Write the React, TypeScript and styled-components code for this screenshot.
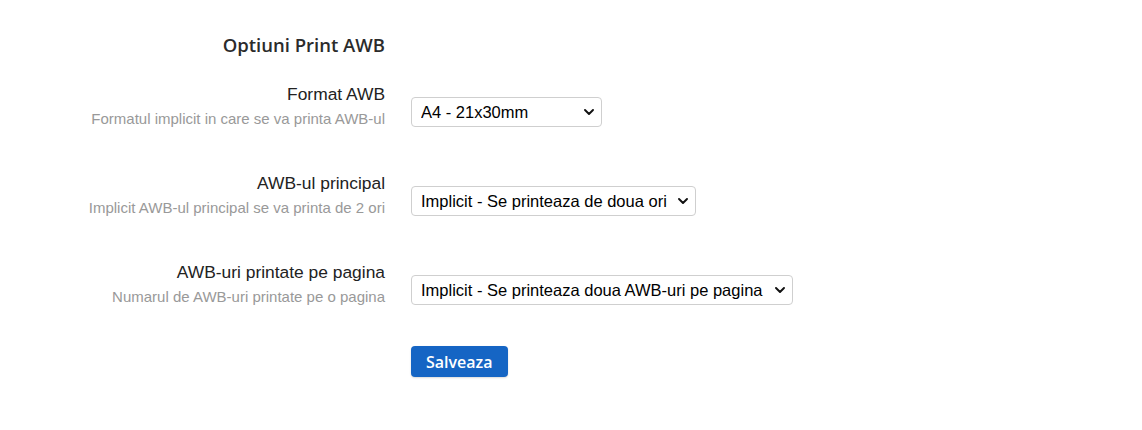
import React from "react";
import styled, { createGlobalStyle } from "styled-components";

const Global = createGlobalStyle`
  html, body { margin: 0; padding: 0; background: #fff; }
  body { font-family: "Liberation Sans", Arial, sans-serif; color: #222; }
`;

const Page = styled.div`
  padding-top: 33px;
  width: 1142px;
  height: 430px;
  box-sizing: border-box;
`;

const Grid = styled.div`
  display: grid;
  grid-template-columns: 385px 1fr;
  column-gap: 26px;
`;

const Title = styled.h2`
  margin: 0 0 27px 0;
  text-align: right;
  font-family: "Open Sans", sans-serif;
  font-weight: 600;
  font-size: 18.5px;
  line-height: 24px;
  color: #2b2b2b;
`;

const Rows = styled.div`
  display: flex;
  flex-direction: column;
  gap: 44px;
`;

const LabelBlock = styled.div`
  text-align: right;
`;

const Label = styled.div`
  font-size: 17.4px;
  line-height: 20px;
  color: #222;
`;

const Hint = styled.div`
  margin-top: 5px;
  font-size: 15px;
  line-height: 20px;
  color: #999;
`;

const Control = styled.div`
  padding-top: 13px;
`;

const SelectWrap = styled.span`
  position: relative;
  display: inline-block;
`;

const Select = styled.select<{ $minWidth?: number }>`
  appearance: none;
  -webkit-appearance: none;
  box-sizing: border-box;
  height: 30px;
  min-width: ${(p) => (p.$minWidth ? `${p.$minWidth}px` : "0")};
  padding: 0 28px 0 9px;
  border: 1px solid #cfcfcf;
  border-radius: 4px;
  background: #fff;
  color: #000;
  font-family: "Liberation Sans", Arial, sans-serif;
  font-size: 16.5px;
  outline: none;
`;

const Chevron = styled.svg`
  position: absolute;
  right: 8px;
  top: 50%;
  margin-top: -3px;
  width: 10px;
  height: 6px;
  pointer-events: none;
`;

const Actions = styled.div`
  margin-top: 39px;
`;

const Button = styled.button`
  box-sizing: border-box;
  height: 31px;
  padding: 0 15px;
  border: none;
  border-radius: 4px;
  background: #1565c4;
  color: #fff;
  font-family: "Open Sans", sans-serif;
  font-weight: 600;
  font-size: 16px;
  box-shadow: 0 1px 2px rgba(0, 0, 0, 0.15);
  cursor: pointer;
`;

type FieldProps = {
  label: string;
  hint: string;
  options: string[];
  minWidth?: number;
};

const Field = ({ label, hint, options, minWidth }: FieldProps) => (
  <Grid>
    <LabelBlock>
      <Label>{label}</Label>
      <Hint>{hint}</Hint>
    </LabelBlock>
    <Control>
      <SelectWrap>
        <Select $minWidth={minWidth} defaultValue={options[0]}>
          {options.map((o) => (
            <option key={o} value={o}>
              {o}
            </option>
          ))}
        </Select>
        <Chevron viewBox="0 0 10 6">
          <path d="M1 1 L5 5 L9 1" fill="none" stroke="#111" strokeWidth="1.9" strokeLinecap="round" strokeLinejoin="round" />
        </Chevron>
      </SelectWrap>
    </Control>
  </Grid>
);

export default function App() {
  return (
    <>
      <Global />
      <Page>
        <Grid>
          <Title>Optiuni Print AWB</Title>
          <div />
        </Grid>
        <Rows>
          <Field
            label="Format AWB"
            hint="Formatul implicit in care se va printa AWB-ul"
            options={["A4 - 21x30mm"]}
            minWidth={191}
          />
          <Field
            label="AWB-ul principal"
            hint="Implicit AWB-ul principal se va printa de 2 ori"
            options={["Implicit - Se printeaza de doua ori"]}
          />
          <Field
            label="AWB-uri printate pe pagina"
            hint="Numarul de AWB-uri printate pe o pagina"
            options={["Implicit - Se printeaza doua AWB-uri pe pagina"]}
          />
        </Rows>
        <Grid>
          <div />
          <Actions>
            <Button type="button">Salveaza</Button>
          </Actions>
        </Grid>
      </Page>
    </>
  );
}
